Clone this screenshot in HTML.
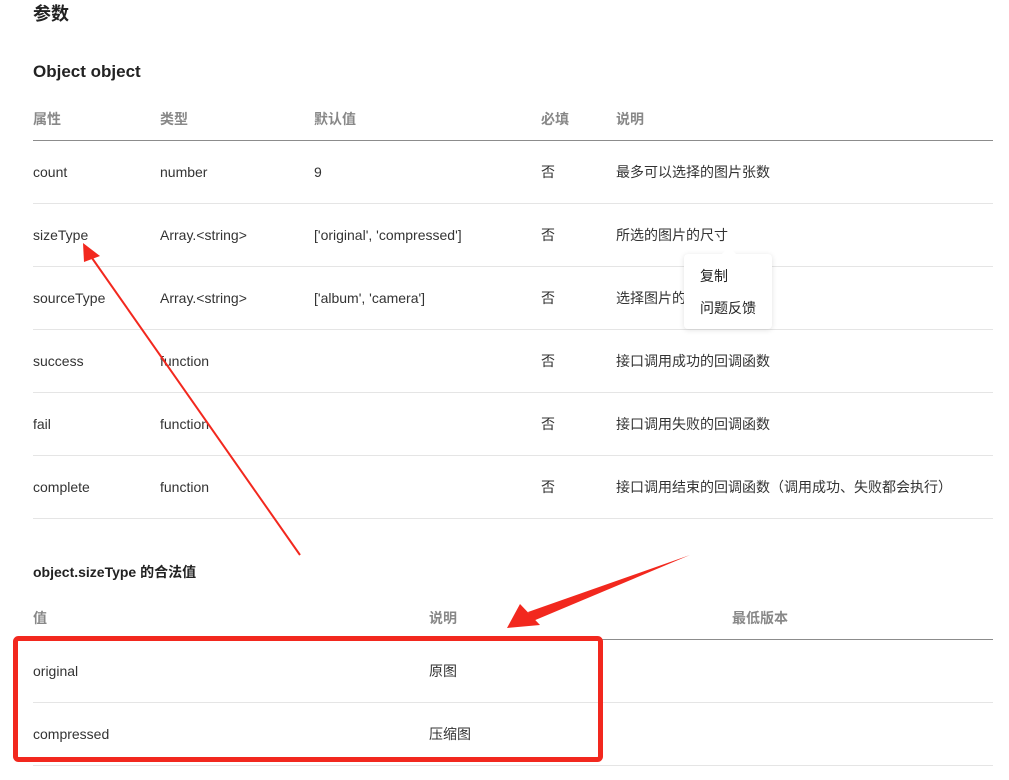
<!DOCTYPE html>
<html><head><meta charset="utf-8"><style>
body{margin:0;width:1009px;height:780px;background:#fff;position:relative;overflow:hidden;font-family:"Liberation Sans","Noto Sans CJK SC",sans-serif;color:#333;}
.t{position:absolute;font-size:14px;line-height:16px;white-space:nowrap;}
.h{color:#888;font-weight:bold;}
.l{position:absolute;left:33px;width:960px;height:1px;background:#e5e5e5;}
.hl{background:#8c8c8c;}
</style></head><body>
<div class="t" style="left:33px;top:4px;font-size:18px;line-height:20px;font-weight:bold;color:#222">参数</div>
<div class="t" style="left:33px;top:62px;font-size:17px;line-height:20px;font-weight:bold;color:#222">Object object</div>

<div class="t h" style="left:33px;top:111px">属性</div>
<div class="t h" style="left:160px;top:111px">类型</div>
<div class="t h" style="left:314px;top:111px">默认值</div>
<div class="t h" style="left:541px;top:111px">必填</div>
<div class="t h" style="left:616px;top:111px">说明</div>
<div class="l hl" style="top:140px"></div>

<div class="t" style="left:33px;top:164px">count</div><div class="t" style="left:160px;top:164px">number</div><div class="t" style="left:314px;top:164px">9</div><div class="t" style="left:541px;top:164px">否</div><div class="t" style="left:616px;top:164px">最多可以选择的图片张数</div>
<div class="l" style="top:203px"></div>
<div class="t" style="left:33px;top:227px">sizeType</div><div class="t" style="left:160px;top:227px">Array.&lt;string&gt;</div><div class="t" style="left:314px;top:227px">['original', 'compressed']</div><div class="t" style="left:541px;top:227px">否</div><div class="t" style="left:616px;top:227px">所选的图片的尺寸</div>
<div class="l" style="top:266px"></div>
<div class="t" style="left:33px;top:290px">sourceType</div><div class="t" style="left:160px;top:290px">Array.&lt;string&gt;</div><div class="t" style="left:314px;top:290px">['album', 'camera']</div><div class="t" style="left:541px;top:290px">否</div><div class="t" style="left:616px;top:290px">选择图片的来源</div>
<div class="l" style="top:329px"></div>
<div class="t" style="left:33px;top:353px">success</div><div class="t" style="left:160px;top:353px">function</div><div class="t" style="left:541px;top:353px">否</div><div class="t" style="left:616px;top:353px">接口调用成功的回调函数</div>
<div class="l" style="top:392px"></div>
<div class="t" style="left:33px;top:416px">fail</div><div class="t" style="left:160px;top:416px">function</div><div class="t" style="left:541px;top:416px">否</div><div class="t" style="left:616px;top:416px">接口调用失败的回调函数</div>
<div class="l" style="top:455px"></div>
<div class="t" style="left:33px;top:479px">complete</div><div class="t" style="left:160px;top:479px">function</div><div class="t" style="left:541px;top:479px">否</div><div class="t" style="left:616px;top:479px">接口调用结束的回调函数（调用成功、失败都会执行）</div>
<div class="l" style="top:518px"></div>

<div class="t" style="left:33px;top:564px;font-weight:bold;color:#222">object.sizeType 的合法值</div>
<div class="t h" style="left:33px;top:610px">值</div>
<div class="t h" style="left:429px;top:610px">说明</div>
<div class="t h" style="left:732px;top:610px">最低版本</div>
<div class="l hl" style="top:639px"></div>
<div class="t" style="left:33px;top:663px">original</div><div class="t" style="left:429px;top:663px">原图</div>
<div class="l" style="top:702px"></div>
<div class="t" style="left:33px;top:726px">compressed</div><div class="t" style="left:429px;top:726px">压缩图</div>
<div class="l" style="top:765px"></div>

<div style="position:absolute;left:684px;top:254px;width:88px;height:75px;background:#fff;border-radius:4px;box-shadow:0 1px 6px rgba(0,0,0,0.12)"></div>
<div style="position:absolute;left:724px;top:249px;width:10px;height:10px;background:#fff;transform:rotate(45deg)"></div>
<div class="t" style="left:700px;top:268px;color:#222">复制</div>
<div class="t" style="left:700px;top:300px;color:#222">问题反馈</div>

<svg style="position:absolute;left:0;top:0" width="1009" height="780">
<line x1="300" y1="555" x2="92" y2="258" stroke="#f2281e" stroke-width="2"/>
<polygon points="83,243 100,256 84,262" fill="#f2281e"/>
<polygon points="690,555 528,612 533,621" fill="#f2281e"/>
<polygon points="507,628 520,604 540,625" fill="#f2281e"/>
<rect x="15.5" y="638.5" width="585" height="121" rx="3" fill="none" stroke="#f2281e" stroke-width="5"/>
</svg>
</body></html>
